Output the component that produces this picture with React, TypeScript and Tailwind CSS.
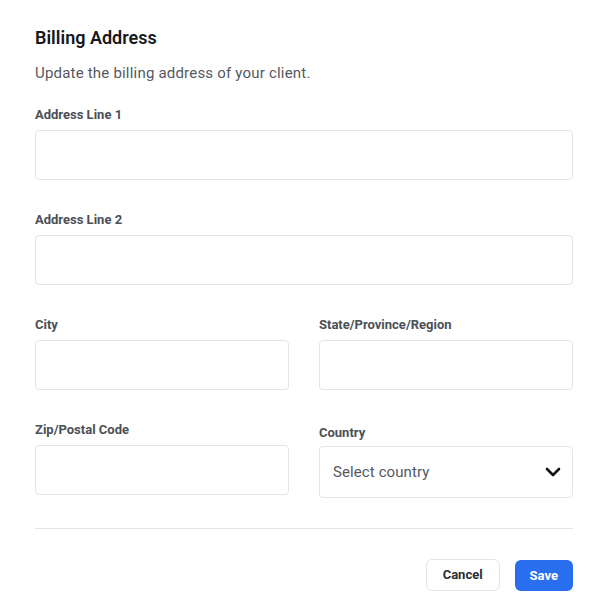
import { ChevronDown } from 'lucide-react'

function Field({ label, className = '' }: { label: string; className?: string }) {
  return (
    <div className={className}>
      <label className="block text-[13px] leading-[18px] font-bold text-[#4b4f56] mb-[6px]">{label}</label>
      <input
        type="text"
        className="block w-full h-[50px] rounded border border-[#e3e5e8] bg-white px-3 text-[15px] text-gray-800 outline-none"
      />
    </div>
  )
}

export default function App() {
  return (
    <div
      className="min-h-screen bg-white pl-[35px] pr-[37px] pt-6 pb-6"
      style={{ fontFamily: 'Roboto, "Liberation Sans", sans-serif' }}
    >
      <h2 className="text-[18px] leading-7 font-semibold text-[#16181c]">Billing Address</h2>
      <p className="mt-[11px] text-[15px] leading-5 tracking-[0.2px] text-[#55595f]">
        Update the billing address of your client.
      </p>

      <Field label="Address Line 1" className="mt-[23px]" />
      <Field label="Address Line 2" className="mt-[31px]" />

      <div className="mt-[31px] grid grid-cols-2 gap-x-[30px] gap-y-[31px]">
        <Field label="City" />
        <Field label="State/Province/Region" />
        <Field label="Zip/Postal Code" />

        {/* Country select */}
        <div className="mt-[3px]">
          <label className="block text-[13px] leading-[18px] font-bold text-[#4b4f56] mb-1">Country</label>
          <div className="flex items-center justify-between h-[52px] rounded border border-[#e3e5e8] bg-white pl-[13px] pr-[13px]">
            <span className="text-[15px] tracking-[0.1px] text-[#55595f]">Select country</span>
            <ChevronDown size={24} strokeWidth={2.6} className="text-[#111] -mr-[6px]" />
          </div>
        </div>
      </div>

      <div className="mt-[30px] h-px bg-[#e3e5e8]" />

      <div className="mt-[30px] flex justify-end gap-[15px]">
        <button className="h-8 px-4 rounded-md border border-[#e3e5e8] bg-white text-[13px] font-bold text-[#2b2e33]">
          Cancel
        </button>
        <button className="h-[31px] mt-px px-[15px] rounded-md bg-[#2a6ef0] text-[13px] font-bold text-white">
          Save
        </button>
      </div>
    </div>
  )
}
